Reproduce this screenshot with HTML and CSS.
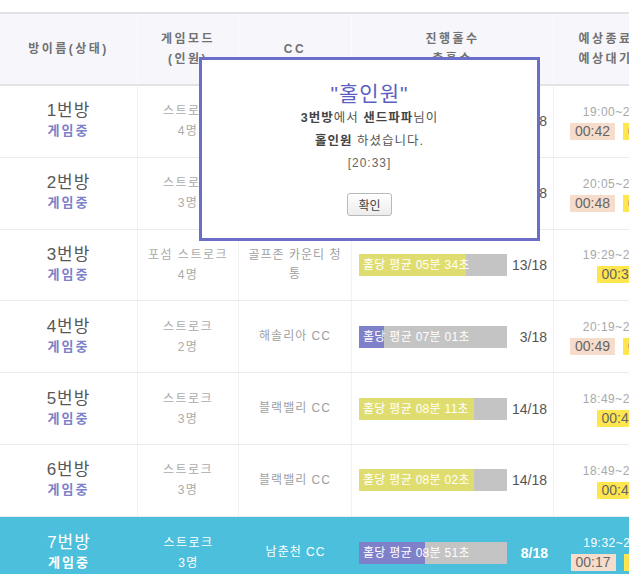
FILE: index.html
```html
<!DOCTYPE html>
<html lang="ko">
<head>
<meta charset="utf-8">
<title>방 현황</title>
<link rel="stylesheet" href="styles.css">
</head>
<body>
<div class="board">
  <div class="row head">
    <div class="cell"><div>방이름(상태)</div></div>
    <div class="cell"><div>게임모드</div><div>(인원)</div></div>
    <div class="cell"><div>CC</div></div>
    <div class="cell"><div>진행홀수</div><div>총홀수</div></div>
    <div class="cell"><div>예상종료시간</div><div>예상대기시간</div></div>
  </div>

  <div class="row">
    <div class="cell"><div class="room">1번방</div><div class="status">게임중</div></div>
    <div class="cell mode"><div>스트로크</div><div>4명</div></div>
    <div class="cell cc">블랙밸리 CC</div>
    <div class="cell prog"><div class="bar"><div class="fill yellow-fill" style="width:82%"></div><span class="bar-text">홀당 평균 06분 12초</span></div><span class="count">15/18</span></div>
    <div class="cell tm"><div class="time">19:00~21:12</div><div class="badges"><span class="badge peach">00:42</span><span class="badge yellow">00:54</span></div></div>
  </div>

  <div class="row">
    <div class="cell"><div class="room">2번방</div><div class="status">게임중</div></div>
    <div class="cell mode"><div>스트로크</div><div>3명</div></div>
    <div class="cell cc">해솔리아 CC</div>
    <div class="cell prog"><div class="bar"><div class="fill purple-fill" style="width:44%"></div><span class="bar-text">홀당 평균 07분 20초</span></div><span class="count">8/18</span></div>
    <div class="cell tm"><div class="time">20:05~21:18</div><div class="badges"><span class="badge peach">00:48</span><span class="badge yellow">01:02</span></div></div>
  </div>

  <div class="row">
    <div class="cell"><div class="room">3번방</div><div class="status">게임중</div></div>
    <div class="cell mode"><div>포섬 스트로크</div><div>4명</div></div>
    <div class="cell cc">골프존 카운티 청통</div>
    <div class="cell prog"><div class="bar"><div class="fill yellow-fill" style="width:72.2%"></div><span class="bar-text">홀당 평균 05분 34초</span></div><span class="count">13/18</span></div>
    <div class="cell tm"><div class="time">19:29~20:03</div><div class="badges"><span class="badge yellow">00:33</span></div></div>
  </div>

  <div class="row">
    <div class="cell"><div class="room">4번방</div><div class="status">게임중</div></div>
    <div class="cell mode"><div>스트로크</div><div>2명</div></div>
    <div class="cell cc">해솔리아 CC</div>
    <div class="cell prog"><div class="bar"><div class="fill purple-fill" style="width:16.7%"></div><span class="bar-text">홀당 평균 07분 01초</span></div><span class="count">3/18</span></div>
    <div class="cell tm"><div class="time">20:19~22:05</div><div class="badges"><span class="badge peach">00:49</span><span class="badge yellow">01:46</span></div></div>
  </div>

  <div class="row">
    <div class="cell"><div class="room">5번방</div><div class="status">게임중</div></div>
    <div class="cell mode"><div>스트로크</div><div>3명</div></div>
    <div class="cell cc">블랙밸리 CC</div>
    <div class="cell prog"><div class="bar"><div class="fill yellow-fill" style="width:77.8%"></div><span class="bar-text">홀당 평균 08분 11초</span></div><span class="count">14/18</span></div>
    <div class="cell tm"><div class="time">18:49~20:13</div><div class="badges"><span class="badge yellow">00:40</span></div></div>
  </div>

  <div class="row">
    <div class="cell"><div class="room">6번방</div><div class="status">게임중</div></div>
    <div class="cell mode"><div>스트로크</div><div>3명</div></div>
    <div class="cell cc">블랙밸리 CC</div>
    <div class="cell prog"><div class="bar"><div class="fill yellow-fill" style="width:77.8%"></div><span class="bar-text">홀당 평균 08분 02초</span></div><span class="count">14/18</span></div>
    <div class="cell tm"><div class="time">18:49~20:13</div><div class="badges"><span class="badge yellow">00:40</span></div></div>
  </div>

  <div class="row active">
    <div class="cell"><div class="room">7번방</div><div class="status">게임중</div></div>
    <div class="cell mode"><div>스트로크</div><div>3명</div></div>
    <div class="cell cc">남춘천 CC</div>
    <div class="cell prog"><div class="bar"><div class="fill purple-fill" style="width:44.4%"></div><span class="bar-text">홀당 평균 08분 51초</span></div><span class="count">8/18</span></div>
    <div class="cell tm"><div class="time">19:32~21:02</div><div class="badges"><span class="badge peach">00:17</span><span class="badge yellow">01:30</span></div></div>
  </div>
</div>

<div class="dialog">
  <div class="d-title">"홀인원"</div>
  <div class="d-line"><b>3번방</b>에서 <b>샌드파파</b>님이</div>
  <div class="d-line"><b>홀인원</b> 하셨습니다.</div>
  <div class="d-time">[20:33]</div>
  <button class="d-btn" type="button">확인</button>
</div>
</body>
</html>
```

FILE: styles.css
```css
html, body {
  margin: 0;
  padding: 0;
  overflow: hidden;
  background: #fff;
}

body {
  font-family: "Liberation Sans", "Noto Sans CJK KR", sans-serif;
  padding-top: 12px;
  position: relative;
  width: 629px;
  height: 574px;
}

.board {
  width: 685px;
  border-top: 2px solid #e2e2e4;
}

.row {
  display: grid;
  grid-template-columns: 138px 101px 113px 202px 131px;
  height: 71.8px;
  box-sizing: border-box;
  border-bottom: 1px solid #ebebeb;
}

.cell {
  display: flex;
  flex-direction: column;
  justify-content: center;
  align-items: center;
  text-align: center;
  border-right: 1px solid #f2f2f2;
  box-sizing: border-box;
}

.head {
  height: 72px;
  background: #f7f7fb;
  border-bottom: 2px solid #e3e3e7;
}

.head .cell {
  font-size: 12px;
  font-weight: bold;
  color: #717171;
  letter-spacing: 2.5px;
  line-height: 20px;
  border-right: 1px solid #fdfdff;
}

.room {
  font-size: 17px;
  line-height: 20px;
  color: #585858;
  letter-spacing: 1px;
}

.status {
  font-size: 13px;
  line-height: 20px;
  font-weight: bold;
  color: #7c81c9;
  letter-spacing: 2px;
}

.mode {
  font-size: 12px;
  line-height: 20px;
  color: #aaaaaa;
  letter-spacing: 1.5px;
}

.cc {
  font-size: 12px;
  line-height: 19px;
  color: #a0a0a0;
  letter-spacing: 1px;
  padding: 0 4px;
}

.prog {
  flex-direction: row;
  justify-content: space-between;
  padding: 0 6px 0 7px;
}

.bar {
  display: grid;
  width: 148px;
  height: 22px;
  background: #c4c4c4;
}

.fill,
.bar-text {
  grid-area: 1 / 1;
}

.fill {
  height: 22px;
}

.yellow-fill {
  background: #dfdd6f;
}

.purple-fill {
  background: #7f80ca;
}

.bar-text {
  font-size: 12px;
  line-height: 22px;
  color: #fff;
  text-align: left;
  padding-left: 4px;
  letter-spacing: 0.3px;
  white-space: nowrap;
}

.count {
  font-size: 14px;
  color: #555;
}

.time {
  font-size: 12px;
  line-height: 18px;
  color: #a8a8a8;
  letter-spacing: 0.5px;
}

.badges {
  display: flex;
  gap: 8px;
  margin-top: 2px;
}

.badge {
  width: 45px;
  height: 17px;
  line-height: 17px;
  font-size: 14px;
  color: #666;
  text-align: center;
}

.peach {
  background: #f6dccb;
}

.yellow {
  background: #ffe54e;
}

.active {
  background: #4bbfdc;
  border-bottom: none;
}

.active .cell {
  border-right: none;
}

.active .room,
.active .status,
.active .mode,
.active .cc,
.active .time {
  color: #fff;
}

.active .count {
  color: #fff;
  font-weight: bold;
}

.dialog {
  position: absolute;
  left: 199px;
  top: 57px;
  width: 341px;
  height: 184px;
  box-sizing: border-box;
  border: 3px solid #6a6ec8;
  background: #fff;
  text-align: center;
  padding-top: 21px;
  font-family: "Liberation Sans", "Noto Sans CJK KR", sans-serif;
}

.d-title {
  font-size: 21px;
  line-height: 26px;
  color: #5b5fbf;
  letter-spacing: 1px;
}

.d-line {
  font-size: 12.5px;
  line-height: 23px;
  color: #555;
  letter-spacing: 1px;
}

.d-line b {
  color: #444;
}

.d-time {
  font-size: 12px;
  line-height: 20px;
  color: #666;
  letter-spacing: 1px;
}

.d-btn {
  display: block;
  margin: 20px auto 0;
  width: 45px;
  height: 23px;
  padding: 0;
  border: 1px solid #b9b9b9;
  border-radius: 3px;
  background: linear-gradient(#ffffff, #ececec);
  font-family: "Liberation Sans", "Noto Sans CJK KR", sans-serif;
  font-size: 12px;
  color: #444;
}
```
